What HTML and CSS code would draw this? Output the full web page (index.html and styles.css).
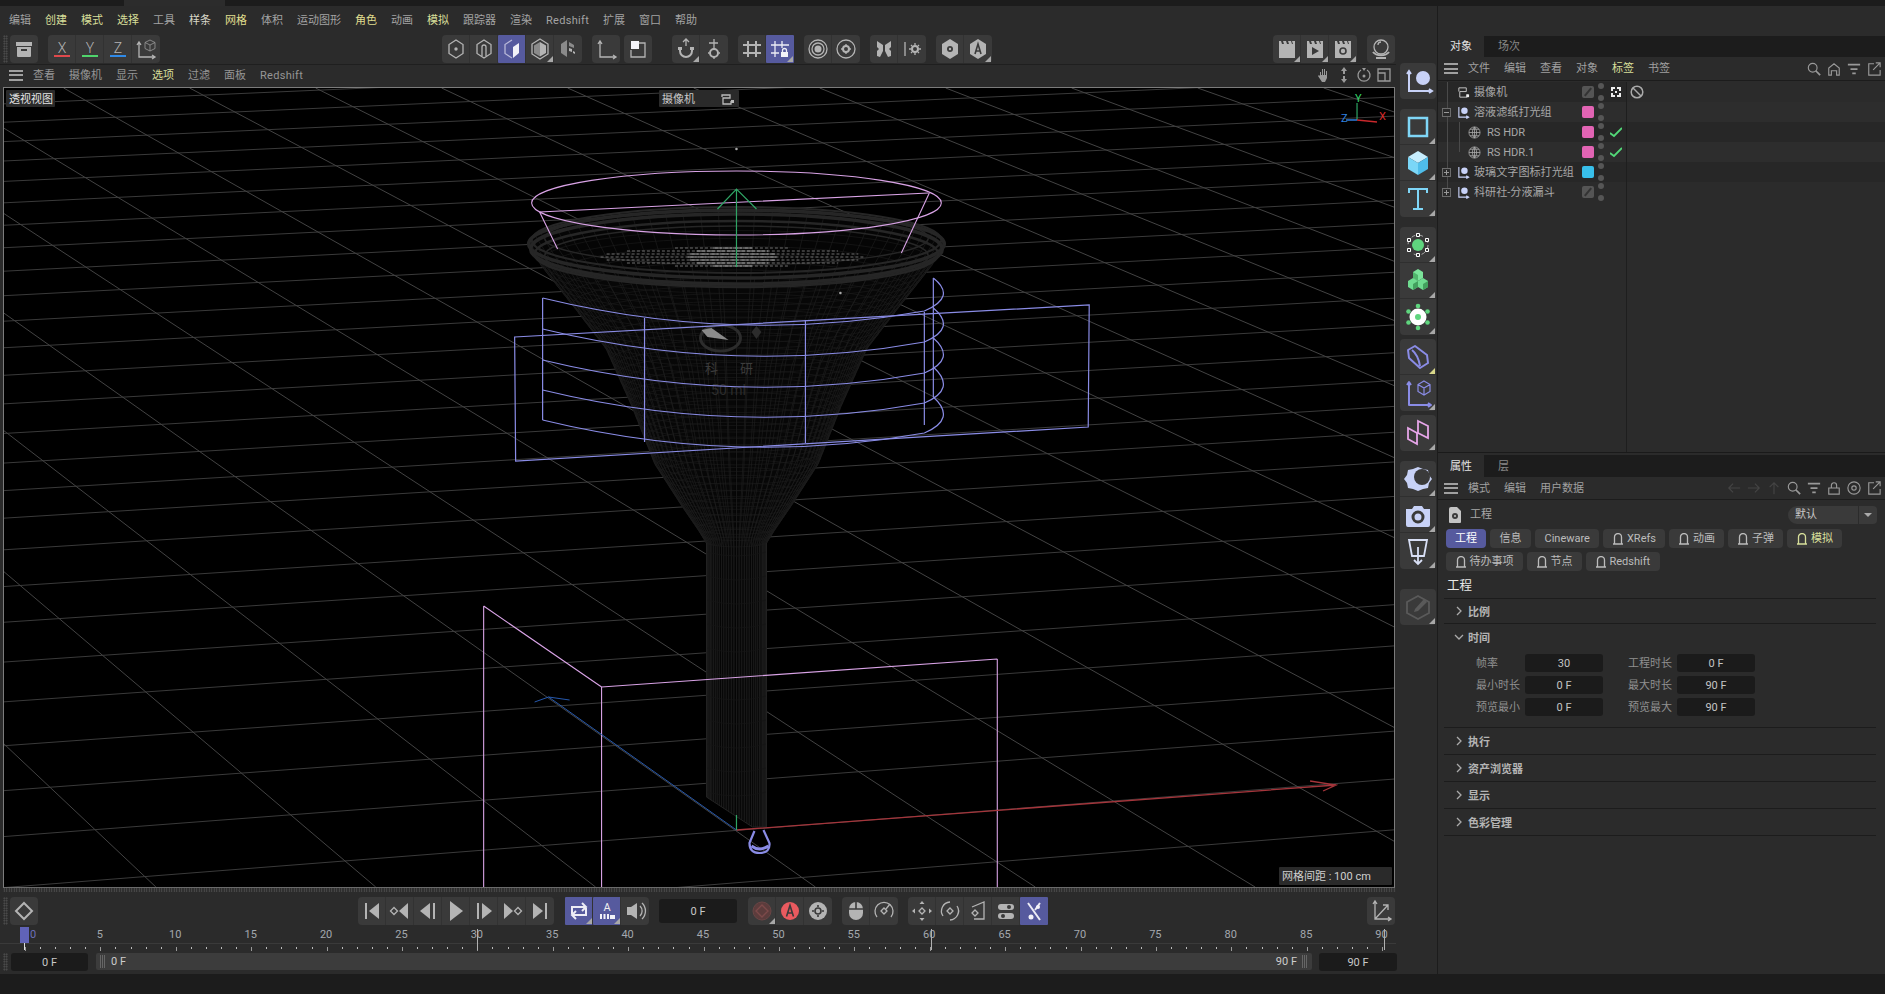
FILE: index.html
```html
<!DOCTYPE html>
<html lang="zh-CN">
<head>
<meta charset="utf-8">
<title>Cinema 4D</title>
<link rel="stylesheet" href="styles.css">
</head>
<body>
<div class="topstrip"><div class="toptab"></div></div>
<div class="workspace">
  <main class="leftcol">
    <nav class="menu">
      <span>编辑</span><span class="y">创建</span><span class="y">模式</span><span class="y">选择</span><span>工具</span><span class="w">样条</span><span class="y2">网格</span><span>体积</span><span>运动图形</span><span class="y2">角色</span><span>动画</span><span class="y">模拟</span><span>跟踪器</span><span>渲染</span><span class="lat">Redshift</span><span>扩展</span><span>窗口</span><span>帮助</span>
    </nav>
    <div class="toolbar">
      <i class="grip"></i>
      <div class="grp"><div class="ic"><svg viewBox="0 0 28 28"><path class="f" d="M6 7h16v4H6z"/><path class="f" d="M7 12h14v9a1 1 0 0 1-1 1H8a1 1 0 0 1-1-1zm4 2v2h6v-2z" fill-rule="evenodd"/></svg></div></div>
      <div class="grp g48">
        <div class="ic axl xa">X</div><div class="ic axl ya">Y</div><div class="ic axl za">Z</div>
        <div class="ic"><svg viewBox="0 0 28 28"><path class="s" d="M7 8v14h15M5 10l2-3 2 3M20 20l3 2-3 2"/><path class="t" d="M18 5l5 2.500v6L18 16l-5-2.500v-6zM13 7.500l5 2.500 5-2.500M18 10v6"/></svg></div>
      </div>
      <div class="grp g282">
        <div class="ic"><svg viewBox="0 0 28 28"><path class="s" d="M14 5l7 4.500v9L14 23l-7-4.500v-9z"/><circle class="f" cx="14" cy="14" r="1.700"/></svg></div>
        <div class="ic"><svg viewBox="0 0 28 28"><path class="s" d="M14 5l7 4.500v9L14 23l-7-4.500v-9z"/><path class="s" d="M12 21v-9a2 2 0 0 1 4 0v9"/></svg></div>
        <div class="ic on"><svg viewBox="0 0 28 28"><path class="t2" d="M14 5L7 9.500v9L14 23"/><path class="w" d="M15 12l6-4v10l-6 5z"/></svg></div>
        <div class="ic tri"><svg viewBox="0 0 28 28"><path class="s" d="M14 4l8 5v10l-8 5-8-5V9z"/><path class="f" d="M14 7l6 3.500v7.500l-6 3.500z"/><path class="m" d="M14 7l-6 3.500v7.500l6 3.500z"/></svg></div>
        <div class="ic"><svg viewBox="0 0 28 28"><path class="m" d="M13 5L7 9v9l6 4zM15 7l5 3v3l-5-2z"/><path class="f" d="M15 13l3 1v3l-3-1zM19 16l2 1v2l-2-1z"/></svg></div>
      </div>
      <div class="grp g10"><div class="ic"><svg viewBox="0 0 28 28"><path class="s" d="M8 7v15h15M6 9l2-3 2 3M21 20l3 2-3 2"/></svg></div></div>
      <div class="grp g4"><div class="ic"><svg viewBox="0 0 28 28"><path class="s" d="M14 8h7v14H7v-7"/><path class="w" d="M7 6h8v8H7z"/></svg></div></div>
      <div class="grp g20">
        <div class="ic tri"><svg viewBox="0 0 28 28"><path class="s2" d="M8 12v4a6 6 0 0 0 12 0v-4"/><path class="f" d="M6 12h4v3H6zM18 12h4v3h-4z"/><path class="s" d="M14 5v6M11 7l3-3 3 3"/></svg></div>
        <div class="ic"><svg viewBox="0 0 28 28"><circle class="s2" cx="14" cy="18" r="4"/><path class="s" d="M14 4v8M9 8h9M14 12v2M14 22v2M9 18H8M20 18h-1"/></svg></div>
      </div>
      <div class="grp g10">
        <div class="ic"><svg viewBox="0 0 28 28"><path class="s2" d="M10 6v16M18 6v16M5 10h18M5 18h18"/></svg></div>
        <div class="ic on tri"><svg viewBox="0 0 28 28"><path class="l" d="M9 6v16M16 6v7M5 10h18M5 18h8"/><path class="w" d="M15 17h7v5h-7z"/><path class="l" d="M16.500 17v-1.500a2 2 0 0 1 4 0V17"/></svg></div>
      </div>
      <div class="grp g10">
        <div class="ic"><svg viewBox="0 0 28 28"><circle class="s" cx="14" cy="14" r="9"/><circle class="s" cx="14" cy="14" r="6"/><circle class="f" cx="14" cy="14" r="3.500"/></svg></div>
        <div class="ic"><svg viewBox="0 0 28 28"><circle class="s" cx="14" cy="14" r="9"/><circle class="s2" cx="14" cy="14" r="3"/><path class="s" d="M14 9v2M14 17v2M9 14h2M17 14h2"/></svg></div>
      </div>
      <div class="grp g10">
        <div class="ic"><svg viewBox="0 0 28 28"><path class="f" d="M13 10L7 6v6l2 2-2 2v5l3 1 3-6zM15 10l6-4v6l-2 2 2 2v5l-3 1-3-6z"/></svg></div>
        <div class="ic"><svg viewBox="0 0 28 28"><path class="s" d="M7 7v14"/><circle class="s2" cx="17" cy="14" r="3"/><path class="s" d="M17 8v2M17 18v2M11 14h2M21 14h2M13 10l1 1M21 18l-1-1M13 18l1-1M21 10l-1 1"/></svg></div>
      </div>
      <div class="grp g10">
        <div class="ic"><svg viewBox="0 0 28 28"><path class="f" d="M14 4l8 5v10l-8 5-8-5V9z"/><circle class="d" cx="14" cy="14" r="3"/><circle class="f" cx="14" cy="14" r="1.200"/></svg></div>
        <div class="ic tri"><svg viewBox="0 0 28 28"><path class="f" d="M14 4l8 5v10l-8 5-8-5V9z"/><path class="ds" d="M11 19l3-10 3 10M12 16h4"/></svg></div>
      </div>
      <div class="grp g281">
        <div class="ic tri"><svg viewBox="0 0 28 28"><path class="f" d="M6 6h2l1 3h2l-1-3h3l1 3h2l-1-3h3l1 3h1l-1-3h3v17H6z"/></svg></div>
        <div class="ic tri"><svg viewBox="0 0 28 28"><path class="f" d="M6 6h2l1 3h2l-1-3h3l1 3h2l-1-3h3l1 3h1l-1-3h3v17H6z"/><path class="d" d="M11 12l7 4-7 4z"/></svg></div>
        <div class="ic tri"><svg viewBox="0 0 28 28"><path class="f" d="M6 6h2l1 3h2l-1-3h3l1 3h2l-1-3h3l1 3h1l-1-3h3v17H6z"/><circle class="ds" cx="14" cy="16" r="3"/></svg></div>
      </div>
      <div class="grp g10"><div class="ic"><svg viewBox="0 0 28 28"><circle class="s" cx="14" cy="12" r="7"/><path class="s" d="M11 10a3 3 0 0 1 3-3"/><path class="s2" d="M6 17a9 6 0 0 0 16 0M9 23h10"/></svg></div></div>
    </div>

    <div class="vphead">
      <div class="burger"><b></b><b></b><b></b></div>
      <span>查看</span><span>摄像机</span><span>显示</span><span class="y">选项</span><span>过滤</span><span>面板</span><span class="lat">Redshift</span>
      <div class="vpnav">
        <svg viewBox="0 0 16 16"><path class="f" d="M4 8V5h1v3h1V2h1v6h1V2h1v6h1V4h1v7l-2 4H6L2 9l1-1 1 1z"/></svg>
        <svg viewBox="0 0 16 16"><path class="f" d="M8 0l3 4H9v3H7V4H5zM8 16l3-4H9V9H7v3H5z"/></svg>
        <svg viewBox="0 0 16 16"><path class="s" d="M5 3a6 6 0 1 0 6 0"/><circle class="f" cx="8" cy="9" r="1.500"/><path class="f" d="M6 1h4l-2 3z"/></svg>
        <svg viewBox="0 0 16 16"><path class="s" d="M2 2h12v12H2zM2 6h7v8"/></svg>
      </div>
    </div>

    <div class="canvas">
      <svg id="scene" viewBox="4 88 1391 799" preserveAspectRatio="none">
        <g id="grid"></g>
        <g id="funnel"></g>
        <g class="lab">
          <text x="712" y="373">科</text><text x="747" y="373">研</text><text class="lab2" x="729" y="395">50 ml</text>
        </g>
        <path class="pink" d="M484 606V887M484 606L602 687M602 687L998 659M602 687V887M998 659V887"/>
        <ellipse class="pink" cx="737" cy="203" rx="205" ry="32"/>
        <path class="pink" d="M540 212L929 193M540 212L558 249M930 193L902 253"/>
        <path class="vio" d="M543 298Q737 345 925 311Q958 297 934 278M543 329Q737 376 925 342Q958 328 934 308M543 360Q737 407 925 373Q958 359 934 338M543 390Q737 437 925 403Q958 389 934 367M543 420Q737 467 925 433Q958 419 934 397"/>
        <path class="vio" d="M543 298V420M645 318V442M806 320V443M925 312V425M934 278V397"/>
        <path class="vio" d="M515 337L1090 305L1089 427L516 461Z"/>
        <path class="axr" d="M737 830L1337 785M1311 781L1337 785L1324 791"/>
        <path class="axb" d="M737 830L549 697M535 702L549 697L570 700"/>
        <path class="axg" d="M737 815V830M737 267V189M718 209L737 189L757 209"/>
        <path class="vio2" d="M755 831L750 843Q750 853 760 853Q771 853 770 843L764 830"/>
        <path class="vio3" d="M752 846Q760 852 769 846"/>
        <circle class="dotw" cx="737" cy="149" r="1.300"/><circle class="dotw" cx="841" cy="293" r="1.300"/>
        <path class="axg" d="M1358 120V103"/><path class="axr2" d="M1358 120L1378 122"/><path class="axb2" d="M1358 120L1347 120"/>
      </svg>
      <div class="tagvp persp">透视视图</div>
      <div class="tagvp campill"><span>摄像机</span>
        <svg viewBox="0 0 16 14"><path class="s" d="M2 5V3h8v3H3v6h8V9"/><path class="f" d="M11 8h3v3h-3z"/></svg>
      </div>
      <span class="axlab lx">X</span><span class="axlab ly">Y</span><span class="axlab lz">Z</span>
      <div class="tagvp gridinfo">网格间距 : 100 cm</div>
    </div>

    <div class="dotted"></div>
    <div class="tlbar">
      <i class="grip"></i>
      <div class="grp"><div class="ic"><svg viewBox="0 0 28 28"><path class="s2" d="M14 6l8 8-8 8-8-8z"/></svg></div></div>
      <div class="grp t320">
        <div class="ic"><svg viewBox="0 0 28 28"><path class="s2" d="M8 6v16"/><path class="f" d="M21 6v16L11 14z"/></svg></div>
        <div class="ic"><svg viewBox="0 0 28 28"><path class="s" d="M8 10.500L11.500 14 8 17.500 4.500 14z"/><path class="f" d="M22 6v16L13 14z"/></svg></div>
        <div class="ic"><svg viewBox="0 0 28 28"><path class="f" d="M16 6v16L6 14zM19 6h2v16h-2z"/></svg></div>
        <div class="ic"><svg viewBox="0 0 28 28"><path class="f" d="M8 4l13 10L8 24z"/></svg></div>
        <div class="ic"><svg viewBox="0 0 28 28"><path class="f" d="M7 6h2v16H7zM12 6l10 8-10 8z"/></svg></div>
        <div class="ic"><svg viewBox="0 0 28 28"><path class="f" d="M6 6l9 8-9 8z"/><path class="s" d="M20 10.500l3.500 3.500-3.500 3.500-3.500-3.500z"/></svg></div>
        <div class="ic"><svg viewBox="0 0 28 28"><path class="f" d="M7 6l10 8-10 8z"/><path class="s2" d="M20 6v16"/></svg></div>
      </div>
      <div class="grp g11">
        <div class="ic on tri"><svg viewBox="0 0 28 28"><path class="l2" d="M7 17V10h13M17 6l4 4-4 4M21 11v7H8M11 14l-4 4 4 4"/></svg></div>
        <div class="ic on tri"><span class="ltr">A</span><svg viewBox="0 0 28 28"><path class="w" d="M7 17h2v5H7zM10.500 17h2v5h-2zM14 17h2v5h-2zM17 18h5v4h-5z"/></svg></div>
        <div class="ic"><svg viewBox="0 0 28 28"><path class="f" d="M6 10h4l6-4v16l-6-4H6z"/><path class="s" d="M19 9a7 7 0 0 1 0 10M21 6a11 11 0 0 1 0 16"/></svg></div>
      </div>
      <div class="frame g10">0 F</div>
      <div class="grp g11">
        <div class="ic tri"><svg viewBox="0 0 28 28"><circle class="rd" cx="14" cy="14" r="9"/><path class="rs" d="M14 8l6 6-6 6-6-6z"/></svg></div>
        <div class="ic"><svg viewBox="0 0 28 28"><circle class="re" cx="14" cy="14" r="9"/><path class="ds" d="M10.500 19.500L14 8.500l3.500 11M11.500 16h5"/></svg></div>
        <div class="ic"><svg viewBox="0 0 28 28"><circle class="f" cx="14" cy="14" r="9"/><circle class="ds" cx="14" cy="14" r="3"/><path class="ds" d="M14 8v2M14 18v2M8 14h2M18 14h2"/></svg></div>
      </div>
      <div class="grp g10">
        <div class="ic"><svg viewBox="0 0 28 28"><rect class="f" x="7" y="5" width="14" height="18" rx="7"/><path class="ds" d="M14 5v7M7 12h14"/></svg></div>
        <div class="ic"><svg viewBox="0 0 28 28"><path class="s" d="M7 20a9 9 0 1 1 14 0"/><path class="s" d="M14 11l3 3-3 3-3-3zM16 12l4-5"/></svg></div>
      </div>
      <div class="grp g10">
        <div class="ic"><svg viewBox="0 0 28 28"><path class="s" d="M14 11l3 3-3 3-3-3z"/><path class="f" d="M14 4l2.500 3h-5zM14 24l2.500-3h-5zM4 14l3-2.500v5zM24 14l-3-2.500v5z"/></svg></div>
        <div class="ic"><svg viewBox="0 0 28 28"><path class="s" d="M14 11l3 3-3 3-3-3z"/><path class="s" d="M7 19a9 9 0 0 1 7-14M21 9a9 9 0 0 1-7 14"/></svg></div>
        <div class="ic"><svg viewBox="0 0 28 28"><path class="s" d="M8 10l12-5v17H10"/><path class="s" d="M11 13l3 3-3 3-3-3z"/></svg></div>
        <div class="ic"><svg viewBox="0 0 28 28"><rect class="f" x="6" y="7" width="16" height="6" rx="3"/><rect class="f" x="6" y="16" width="16" height="6" rx="3"/><circle class="d" cx="17" cy="10" r="2"/><circle class="d" cx="11" cy="19" r="2"/></svg></div>
        <div class="ic on"><svg viewBox="0 0 28 28"><path class="l2" d="M8 6l12 17M20 6l-5 7"/><circle class="w" cx="11" cy="20" r="2.500"/><circle class="w" cx="18" cy="10" r="2"/></svg></div>
      </div>
      <div class="grp tend"><div class="ic"><svg viewBox="0 0 28 28"><path class="s" d="M8 5v17h16M6 7l2-3 2 3M21 20l3 2-3 2M8 22L21 8M16 8h5v5"/></svg></div></div>
    </div>

    <div class="ruler">
      <div class="labels">
        <span class="zero">0</span><span>5</span><span>10</span><span>15</span><span>20</span><span>25</span><span>30</span><span>35</span><span>40</span><span>45</span><span>50</span><span>55</span><span>60</span><span>65</span><span>70</span><span>75</span><span>80</span><span>85</span><span>90</span>
      </div>
      <div class="ticks"></div>
      <i class="head"></i>
      <i class="lng l0"></i><i class="lng l30"></i><i class="lng l60"></i><i class="lng l90"></i>
    </div>

    <div class="rangebar">
      <i class="grip"></i>
      <div class="frame rs1">0 F</div>
      <div class="slider"><span class="hd"></span><span>0 F</span><span class="sp"></span><span>90 F</span><span class="hd"></span></div>
      <div class="frame rs2">90 F</div>
    </div>
  </main>

  <aside class="palette">
    <div class="pgrip"></div>
    <div class="grp col"><div class="pi"><svg viewBox="0 0 36 36"><path class="lav" d="M9 8v20h22M7 11l2-3 2 3M29 26l3 2-3 2"/><circle class="lavf" cx="23" cy="15" r="7"/></svg></div></div>
    <div class="grp col g10v">
      <div class="pi tri"><svg viewBox="0 0 36 36"><rect class="cy" x="9" y="9" width="18" height="18"/></svg></div>
      <div class="pi tri"><svg viewBox="0 0 36 36"><path fill="#c6edfd" d="M18 6l10 6-10 6-10-6z"/><path fill="#7ad6f7" d="M8 12l10 6v12L8 24z"/><path fill="#4fbdea" d="M28 12l-10 6v12l10-6z"/></svg></div>
      <div class="pi tri"><svg viewBox="0 0 36 36"><path class="cy2" d="M9 12V8h18v4M18 8v20M13 28h10"/></svg></div>
    </div>
    <div class="grp col g10v">
      <div class="pi tri"><svg viewBox="0 0 36 36"><circle fill="#5fd57e" cx="18" cy="18" r="6"/><circle class="dash" cx="18" cy="18" r="10"/><path class="hnd" d="M16.500 6.500h3v3h-3zM16.500 26.500h3v3h-3zM7.500 11.500h3v3h-3zM25.500 11.500h3v3h-3zM7.500 21.500h3v3h-3zM25.500 21.500h3v3h-3z"/></svg></div>
      <div class="pi tri"><svg viewBox="0 0 36 36"><path fill="#7be39a" d="M18 6l5 3v6l-5 3-5-3V9z"/><path fill="#50b56c" d="M13 9l5 3v6l-5-3z"/><path fill="#6fdc90" d="M13 15l5 3v6l-5 3-5-3v-6z"/><path fill="#43a15e" d="M13 21l5-3v6l-5 3z"/><path fill="#6fdc90" d="M23 15l5 3v6l-5 3-5-3v-6z"/><path fill="#43a15e" d="M23 21l5-3v6l-5 3z"/></svg></div>
      <div class="pi tri"><svg viewBox="0 0 36 36"><circle fill="#fff" cx="18" cy="18" r="8.500"/><circle fill="#5fd57e" cx="18" cy="18" r="3"/><g fill="#5fd57e"><circle cx="18" cy="7" r="2.300"/><circle cx="18" cy="29" r="2.300"/><circle cx="8.500" cy="12.500" r="2.300"/><circle cx="27.500" cy="12.500" r="2.300"/><circle cx="8.500" cy="23.500" r="2.300"/><circle cx="27.500" cy="23.500" r="2.300"/></g></svg></div>
    </div>
    <div class="grp col g4v">
      <div class="pi tri tyl"><svg viewBox="0 0 36 36"><path class="vi" d="M15 7l12 9 1 8-8 5-11-10-1-8zM12 11c5 4 7 10 8 16"/></svg></div>
      <div class="pi tri"><svg viewBox="0 0 36 36"><path class="vi" d="M9 7v23h21M7 10l2-3 2 3M28 28l3 2-3 2"/><path class="vi1" d="M24 6l6 3.500v7L24 20l-6-3.500v-7zM18 9.500l6 3.500 6-3.500M24 13v7"/></svg></div>
    </div>
    <div class="grp col g4v"><div class="pi tri"><svg viewBox="0 0 36 36"><path class="pk" d="M8 13L17 18V29L8 24ZM18 6L28 11V23L18 18Z"/></svg></div></div>
    <div class="grp col g10v">
      <div class="pi tri"><svg viewBox="0 0 36 36"><path class="lavf" d="M18 6l5 2 5 1 1 5 3 4-3 4-1 5-5 1-5 2-5-2-5-1-1-5-3-4 3-4 1-5 5-1z"/><circle fill="#3a3a3a" cx="22" cy="16" r="8"/></svg></div>
      <div class="pi tri"><svg viewBox="0 0 36 36"><path class="lavf" d="M6 12h6l2-3h8l2 3h6v16a2 2 0 0 1-2 2H8a2 2 0 0 1-2-2z"/><circle fill="none" stroke="#3a3a3a" stroke-width="3" cx="18" cy="20" r="5"/></svg></div>
      <div class="pi tri"><svg viewBox="0 0 36 36"><path class="wt" d="M9 7h18l-3 16H12zM18 14v17M14 27l4 4 4-4"/></svg></div>
    </div>
    <div class="grp col g20v"><div class="pi tri"><svg viewBox="0 0 36 36"><path class="dm" d="M18 7l11 6v11l-11 6-11-6V13z"/><path class="dmf" d="M15 20l9-10 3 3-9 9-4 1z"/></svg></div></div>
  </aside>

  <aside class="panels">
    <div class="ptabs"><div class="ptab act">对象</div><div class="ptab">场次</div></div>
    <div class="phead">
      <div class="burger"><b></b><b></b><b></b></div>
      <span>文件</span><span>编辑</span><span>查看</span><span>对象</span><span class="y">标签</span><span>书签</span>
      <div class="picons">
        <svg viewBox="0 0 16 16"><circle class="s" cx="6.500" cy="6.500" r="5"/><path class="s2" d="M10 10l5 5"/></svg>
        <svg viewBox="0 0 16 16"><path class="s" d="M2 15V7l6-5 6 5v8h-3v-5H5v5z"/></svg>
        <svg viewBox="0 0 16 16"><path class="s2" d="M1 3h14M4 8h8M6 13h4"/></svg>
        <svg viewBox="0 0 16 16"><path class="s" d="M8 2H2v13h13V9M10 1h5v5M15 1L7 9"/></svg>
      </div>
    </div>
    <div class="tree">
      <div class="treecols">
        <div class="row r1 vline">
          <span class="tg none"></span><svg class="ni" viewBox="0 0 14 14"><path class="wh" d="M2 6V2h8v4H3v6h8V9"/><path class="whf" d="M10 9h3v3h-3z"/></svg><span class="name">摄像机</span>
          <span class="sw gray"></span><span class="dots"><i></i><i></i></span><span class="tagc"><svg viewBox="0 0 12 12"><path class="whf" d="M1 1h10v10H1zM3 3v6h6V3z" fill-rule="evenodd"/><path class="hole" d="M5 1h2v2H5zM5 9h2v2H5zM1 5h2v2H1zM9 5h2v2H9z"/><path class="whf" d="M5 5h2v2H5z"/></svg></span>
        </div>
        <div class="row vline">
          <span class="tg minus"></span><svg class="ni" viewBox="0 0 14 14"><path class="lv" d="M2 1v11h11M10 10.500l2.500 1.500-2.500 1.500"/><circle class="lvf" cx="8" cy="5" r="3.500"/></svg><span class="name">溶液滤纸打光组</span>
          <span class="sw pinks"></span><span class="dots"><i></i><i></i></span><span class="tagc"></span>
        </div>
        <div class="row r1 vline child">
          <svg class="ni" viewBox="0 0 14 14"><circle class="gl" cx="7" cy="7" r="6"/><path class="gl" d="M1 7h12M2 3.500h10M2 10.500h10M7 1v12M7 1c-3 3-3 9 0 12M7 1c3 3 3 9 0 12"/></svg><span class="name">RS HDR</span>
          <span class="sw pinks"></span><span class="dots"><i></i><i></i></span><span class="tagc"><svg viewBox="0 0 12 12"><path class="chk" d="M0 7l4 3 8-8"/></svg></span>
        </div>
        <div class="row vline child lastch">
          <svg class="ni" viewBox="0 0 14 14"><circle class="gl" cx="7" cy="7" r="6"/><path class="gl" d="M1 7h12M2 3.500h10M2 10.500h10M7 1v12M7 1c-3 3-3 9 0 12M7 1c3 3 3 9 0 12"/></svg><span class="name">RS HDR.1</span>
          <span class="sw pinks"></span><span class="dots"><i></i><i></i></span><span class="tagc"><svg viewBox="0 0 12 12"><path class="chk" d="M0 7l4 3 8-8"/></svg></span>
        </div>
        <div class="row r1 vline">
          <span class="tg plus"></span><svg class="ni" viewBox="0 0 14 14"><path class="lv" d="M2 1v11h11M10 10.500l2.500 1.500-2.500 1.500"/><circle class="lvf" cx="8" cy="5" r="3.500"/></svg><span class="name">玻璃文字图标打光组</span>
          <span class="sw blue"></span><span class="dots"><i></i><i></i></span><span class="tagc"></span>
        </div>
        <div class="row vhalf">
          <span class="tg plus"></span><svg class="ni" viewBox="0 0 14 14"><path class="lv" d="M2 1v11h11M10 10.500l2.500 1.500-2.500 1.500"/><circle class="lvf" cx="8" cy="5" r="3.500"/></svg><span class="name">科研社-分液漏斗</span>
          <span class="sw gray"></span><span class="dots"><i></i><i></i></span><span class="tagc"></span>
        </div>
      </div>
      <div class="tagcol">
        <div class="tr r1"><svg class="ban" viewBox="0 0 14 14"><circle class="bn" cx="7" cy="7" r="5.800"/><path class="bn" d="M3 3l8 8"/></svg></div>
        <div class="tr"></div><div class="tr r1"></div><div class="tr"></div><div class="tr r1"></div>
      </div>
    </div>

    <div class="ptabs attrtabs"><div class="ptab act">属性</div><div class="ptab">层</div></div>
    <div class="phead ah">
      <div class="burger"><b></b><b></b><b></b></div>
      <span>模式</span><span>编辑</span><span>用户数据</span>
      <div class="picons wide">
        <svg class="dimi" viewBox="0 0 16 16"><path class="s" d="M15 8H2M7 3L2 8l5 5"/></svg>
        <svg class="dimi" viewBox="0 0 16 16"><path class="s" d="M1 8h13M9 3l5 5-5 5"/></svg>
        <svg class="dimi" viewBox="0 0 16 16"><path class="s" d="M8 15V2M3 7l5-5 5 5"/></svg>
        <svg viewBox="0 0 16 16"><circle class="s" cx="6.500" cy="6.500" r="5"/><path class="s2" d="M10 10l5 5"/></svg>
        <svg viewBox="0 0 16 16"><path class="s2" d="M1 3h14M4 8h8M6 13h4"/></svg>
        <svg viewBox="0 0 16 16"><path class="s" d="M2 8h12v7H2zM5 8V5a3 3 0 0 1 6 0v3"/></svg>
        <svg viewBox="0 0 16 16"><circle class="s" cx="8" cy="8" r="7"/><circle class="s" cx="8" cy="8" r="2.500"/></svg>
        <svg viewBox="0 0 16 16"><path class="s" d="M8 2H2v13h13V9M10 1h5v5M15 1L7 9"/></svg>
      </div>
    </div>
    <div class="attr">
      <div class="atitle">
        <svg viewBox="0 0 14 18"><path class="f" d="M3 1h6l4 4v11a1 1 0 0 1-1 1H2a1 1 0 0 1-1-1V3a2 2 0 0 1 2-2z"/><circle class="d" cx="7" cy="10" r="3"/><circle class="f" cx="7" cy="10" r="1"/></svg>
        <span>工程</span>
        <div class="dd"><span>默认</span><i></i></div>
      </div>
      <div class="tabs">
        <div class="tb act">工程</div><div class="tb">信息</div><div class="tb">Cineware</div>
        <div class="tb"><svg viewBox="0 0 10 12"><path class="s" d="M0 11h10M1.500 11V4a3.500 3.500 0 0 1 7 0v7"/></svg>XRefs</div>
        <div class="tb"><svg viewBox="0 0 10 12"><path class="s" d="M0 11h10M1.500 11V4a3.500 3.500 0 0 1 7 0v7"/></svg>动画</div>
        <div class="tb"><svg viewBox="0 0 10 12"><path class="s" d="M0 11h10M1.500 11V4a3.500 3.500 0 0 1 7 0v7"/></svg>子弹</div>
        <div class="tb y"><svg viewBox="0 0 10 12"><path class="s" d="M0 11h10M1.500 11V4a3.500 3.500 0 0 1 7 0v7"/></svg>模拟</div>
        <div class="tb"><svg viewBox="0 0 10 12"><path class="s" d="M0 11h10M1.500 11V4a3.500 3.500 0 0 1 7 0v7"/></svg>待办事项</div>
        <div class="tb"><svg viewBox="0 0 10 12"><path class="s" d="M0 11h10M1.500 11V4a3.500 3.500 0 0 1 7 0v7"/></svg>节点</div>
        <div class="tb"><svg viewBox="0 0 10 12"><path class="s" d="M0 11h10M1.500 11V4a3.500 3.500 0 0 1 7 0v7"/></svg>Redshift</div>
      </div>
      <div class="h2">工程</div>
      <div class="sec s25"><svg viewBox="0 0 8 10"><path class="s" d="M2 1l4 4-4 4"/></svg><b>比例</b></div>
      <div class="sec open">
        <div class="shead"><svg viewBox="0 0 10 8"><path class="s" d="M1 2l4 4 4-4"/></svg><b>时间</b></div>
        <div class="fields">
          <label>帧率</label><div class="fi">30</div><label>工程时长</label><div class="fi">0 F</div>
          <label>最小时长</label><div class="fi">0 F</div><label>最大时长</label><div class="fi">90 F</div>
          <label>预览最小</label><div class="fi">0 F</div><label>预览最大</label><div class="fi">90 F</div>
        </div>
      </div>
      <div class="sec"><svg viewBox="0 0 8 10"><path class="s" d="M2 1l4 4-4 4"/></svg><b>执行</b></div>
      <div class="sec"><svg viewBox="0 0 8 10"><path class="s" d="M2 1l4 4-4 4"/></svg><b>资产浏览器</b></div>
      <div class="sec"><svg viewBox="0 0 8 10"><path class="s" d="M2 1l4 4-4 4"/></svg><b>显示</b></div>
      <div class="sec"><svg viewBox="0 0 8 10"><path class="s" d="M2 1l4 4-4 4"/></svg><b>色彩管理</b></div>
    </div>
  </aside>
</div>
<div class="footer"></div>
<script src="scene.js"></script>
</body>
</html>
```
FILE: styles.css
```css
*{box-sizing:border-box}
html,body{margin:0;padding:0}
body{width:1885px;height:994px;overflow:hidden;background:#2b2b2b;color:#a3a3a3;font:11px/1 Roboto,"Noto Sans CJK SC",sans-serif}
.y{color:#d7df9a}.w{color:#d8d8c8}.y2{color:#e0df8f}
.lat{letter-spacing:.3px}
svg{display:block}
.s{fill:none;stroke:currentColor;stroke-width:1.3}
.s2{fill:none;stroke:currentColor;stroke-width:2}
.f{fill:currentColor}
.m{fill:#8a8a8a}
.d{fill:#3a3a3a}
.ds{fill:none;stroke:#3a3a3a;stroke-width:1.6}
.t{fill:none;stroke:#9a9a9a;stroke-width:.8}
.t2{fill:none;stroke:#b8b8d8;stroke-width:1.3}
.l{fill:none;stroke:#ececf5;stroke-width:1.3}
.l2{fill:none;stroke:#ececf5;stroke-width:2}
svg .w{fill:#f2f2f8}
.rd{fill:#5c3c3c;stroke:#6a4545}
.rs{fill:none;stroke:#7c4a4a;stroke-width:1.4}
.re{fill:#ea5a5f}

.topstrip{height:6px;background:#1c1c1c}
.toptab{width:101px;height:6px;margin-left:124px;background:#2c2c2c}
.workspace{display:flex;height:968px}
.footer{height:20px;background:#1c1c1c}

.leftcol{width:1396px;flex:none;display:flex;flex-direction:column}
.menu{height:29px;display:flex;align-items:center;gap:14px;padding-left:9px;padding-bottom:1px}
.toolbar,.tlbar{display:flex;height:28px;padding-left:3px}
.grip{display:block;width:5px;margin-right:2px;flex:none;background:radial-gradient(circle,#555 .7px,transparent 1px) 0 0/2.5px 2.5px}
.grp{display:flex;flex:none;background:#3a3a3a;border-radius:4px;height:28px}
.grp.col{flex-direction:column;height:auto;width:36px}
.ic{width:28px;height:28px;flex:none;position:relative;color:#b4b4b4;display:flex;align-items:center;justify-content:center}
.ic+.ic{box-shadow:-1px 0 0 #323232}
.ic svg{width:28px;height:28px}
.ic.on{background:#565a9e;color:#eee;border-radius:1px}
.tri::after{content:"";position:absolute;right:1px;bottom:1px;border:3px solid transparent;border-right-color:#a8a8a8;border-bottom-color:#a8a8a8}
.tyl::after{border-right-color:#d9d88a;border-bottom-color:#d9d88a}
.axl{font-size:14px;font-weight:300;padding-bottom:3px}
.axl::after{content:"";position:absolute;left:6px;right:6px;bottom:6px;height:2px}
.xa::after{background:#e0494c}.ya::after{background:#4fd46c}.za::after{background:#2f8ae8}
.g48,.g10{margin-left:10px}
.g4{margin-left:4px}.g20{margin-left:20px}.g282{margin-left:282px}.g281{margin-left:281px}.g11{margin-left:11px}
.t320{margin-left:320px}.tend{margin-left:319px}
.g10v{margin-top:10px}.g4v{margin-top:4px}.g20v{margin-top:20px}

.vphead{height:23px;margin-top:1px;border-top:1px solid #1f1f1f;display:flex;align-items:center;padding:0 0 2px 9px;gap:14px;position:relative;color:#969696}
.burger{width:14px;height:11px;display:flex;flex-direction:column;justify-content:space-between;flex:none;margin-right:-4px}
.burger b{display:block;height:2px;background:#a0a0a0}
.vpnav{margin-left:auto;display:flex;gap:4px;padding-right:4px;color:#9a9a9a}
.vpnav svg{width:16px;height:16px}

.canvas{width:1392px;height:801px;margin-left:3px;border:1px solid #7c7c7c;border-bottom-color:#6a6a6a;background:#000;position:relative;overflow:hidden}
#scene{width:100%;height:100%;position:absolute;left:0;top:0}
.pink{fill:none;stroke:#d9a3e6;stroke-width:1.1}
.vio{fill:none;stroke:#8a8ce6;stroke-width:1.2}
.vio2{fill:none;stroke:#8a8ce6;stroke-width:2.2}
.vio3{fill:none;stroke:#8a8ce6;stroke-width:3}
.axr{fill:none;stroke:#a5353b;stroke-width:1.3}
.axb{fill:none;stroke:#2a62c0;stroke-width:.9}
.axg{fill:none;stroke:#2fa565;stroke-width:1.2}
.axr2{stroke:#c9282c;stroke-width:1.5}.axb2{stroke:#2f7fe0;stroke-width:1.5}
.dotw{fill:#aaa}
.lab text{fill:#3c3c3c;font-size:13px;text-anchor:middle}
.lab .lab2{font-size:14px;fill:#2c2c2c}
.tagvp{position:absolute;background:#2a2a2a;color:#cfcfcf;height:17px;display:flex;align-items:center;border-radius:1px;padding-top:1px}
.persp{left:2px;top:2px;padding:1px 2px 0 3px;color:#e4e4e4}
.campill{left:655px;top:2px;width:80px;padding:1px 3px 0 3px;justify-content:space-between;color:#c8c8c8}
.campill svg{width:16px;height:14px;color:#bbb}
.gridinfo{right:2px;bottom:2px;width:113px;height:18px;padding-left:3px}
.axlab{position:absolute;font-size:11px}
.lx{left:1375px;top:23px;color:#d42a2a}.ly{left:1351px;top:5px;color:#35d56a}.lz{left:1337px;top:25px;color:#2f80e0}

.dotted{height:4px;margin-left:3px;background:radial-gradient(circle,#505050 .6px,transparent 1px) 0 0/2.5px 2px}
.tlbar{margin-top:5px}
.frame{background:#1b1b1b;border-radius:3px;flex:none;color:#c8c8c8;display:flex;align-items:center;justify-content:center}
.tlbar .frame{width:78px;height:24px;margin-top:2px}
.ltr{position:absolute;top:5px;left:0;right:0;text-align:center;font-size:11px;color:#eee}

.ruler{height:25px;margin-top:2px;position:relative;overflow:hidden}
.labels{display:flex;margin-left:-13.2px;height:16px;align-items:center;padding-bottom:1px;color:#a3a8ae}
.labels span{width:75.4px;flex:none;text-align:center}
.labels .zero{padding-left:17px;color:#6d70b8}
.ticks{position:absolute;left:0;right:0;top:16px;height:9px;border-top:1px solid #3a3a3a;
  background:repeating-linear-gradient(90deg,#999 0 1px,transparent 1px 75.4px) 24.5px 3px/100% 4px no-repeat,
  repeating-linear-gradient(90deg,#bbb 0 1px,transparent 1px 15.08px) 24.5px 3px/100% 2px no-repeat}
.head{position:absolute;left:20px;top:0;width:9px;height:16px;background:#6063b8}
.lng{position:absolute;width:1px;background:#b0b0b0;top:2px;height:21px}
.l0{left:24px;top:16px;height:7px;background:#ddd}.l30{left:477px}.l60{left:931px}.l90{left:1384px}
.rangebar{display:flex;height:18px;margin-top:1px;padding-left:3px;align-items:stretch}
.rangebar .grip{margin-right:1px}
.rs1{width:77px;margin-left:2px}
.slider{width:1216px;margin-left:8px;background:#3c3c3c;border-radius:2px;display:flex;align-items:center;gap:5px;padding:0 4px;color:#ccc;flex:none;height:17px}
.slider .sp{flex:1}
.slider .hd{width:6px;height:13px;background:repeating-linear-gradient(90deg,#666 0 1px,transparent 1px 2px)}
.rs2{width:78px;margin-left:7px}

.palette{width:41px;flex:none;padding:0 1px 0 4px;position:relative}
.pgrip{height:30px;margin:0 4px 27px 8px;background:radial-gradient(circle,#555 .7px,transparent 1px) 0 31px/2.5px 2.5px repeat-x}
.pi{width:36px;height:36px;position:relative;flex:none}
.pi+.pi{box-shadow:0 -1px 0 #2f2f2f}
.pi svg{width:36px;height:36px}
.lav{fill:none;stroke:#c8d2f7;stroke-width:2}
.lavf{fill:#c8d2f7}
.cy{fill:none;stroke:#7fd6f7;stroke-width:2.5}
.cy2{fill:none;stroke:#7fd6f7;stroke-width:2}
.dash{fill:none;stroke:#aaa;stroke-width:1;stroke-dasharray:4 4}
.hnd{fill:#3a3a3a;stroke:#fff;stroke-width:1}
.vi{fill:none;stroke:#8a8ce6;stroke-width:2;stroke-linejoin:round}
.vi1{fill:none;stroke:#8a8ce6;stroke-width:1.2}
.pk{fill:none;stroke:#e6a5e8;stroke-width:1.8}
.wt{fill:none;stroke:#d8dff5;stroke-width:1.8}
.dm{fill:none;stroke:#5a5a5a;stroke-width:1.8}
.dmf{fill:#5a5a5a}

.panels{flex:1;border-left:1px solid #1c1c1c;padding-top:30px;display:flex;flex-direction:column;min-width:0}
.ptabs{height:21px;background:#1c1c1c;display:flex;flex:none}
.ptab{width:46px;display:flex;align-items:center;padding-left:12px;color:#888;font-size:11px}
.ptab+.ptab{padding-left:14px}
.ptab.act{background:#2b2b2b;color:#e4e4e4}
.attrtabs{height:22px}
.phead{height:24px;flex:none;display:flex;align-items:center;gap:14px;padding-left:6px;border-bottom:1px solid #1c1c1c;color:#a0a0a0}
.phead.ah{height:23px}
.phead .burger{margin-right:-4px}
.picons{margin-left:auto;display:flex;gap:6px;padding-right:4px;color:#999}
.picons svg{width:14px;height:14px}
.dimi{color:#444}
.tree{height:372px;display:flex;padding-top:1px;border-bottom:1px solid #1a1a1a;margin-bottom:2px;flex:none}
.treecols{width:189px;flex:none;border-right:1px solid #1e1e1e}
.row{height:20px;display:flex;align-items:center;padding-left:4px;position:relative;background:#2d2d2d;color:#a8a8a8}
.row.r1{background:#272727}
.row:last-child{background:#2b2b2b}
.tg{width:9px;height:9px;flex:none;margin-right:6px;border:1px solid #6c6c6c;background:#2b2b2b;position:relative;z-index:1;color:#888}
.tg.none{border-color:transparent;background:none}
.tg.minus::before,.tg.plus::before{content:"";position:absolute;left:1px;right:1px;top:3px;height:1px;background:#999}
.tg.plus::after{content:"";position:absolute;top:1px;bottom:1px;left:3px;width:1px;background:#999}
.vline::before,.vhalf::before{content:"";position:absolute;left:9px;top:0;bottom:0;width:1px;background:#4a4a4a}
.vhalf::before{bottom:10px}
.child::after{content:"";position:absolute;left:21px;top:0;bottom:0;width:1px;background:#4a4a4a}
.lastch::after{bottom:10px}
.ni{width:13px;height:13px;flex:none;margin-right:4px}
.child .ni{margin-left:26px;margin-right:6px}
.name{flex:1;white-space:nowrap;font-size:11.1px;padding-top:2px}
.sw{width:12px;height:12px;flex:none;border-radius:2px;margin-right:-1px;transform:translateX(1px)}
.pinks{background:#e264b4}.blue{background:#38bfea}
.gray{background:#555;position:relative}
.gray::after{content:"";position:absolute;left:5px;top:1px;width:2px;height:10px;background:#333;transform:rotate(40deg)}
.dots{width:16px;flex:none;display:flex;flex-direction:column;align-items:center;gap:6px;margin-left:1px}
.dots i{width:6px;height:6px;border-radius:50%;background:#565656;display:block}
.tagc{width:16px;height:12px;flex:none;margin-right:1px;display:block}
.tagc svg{width:12px;height:12px;margin-left:1px}
.wh{fill:none;stroke:#ccc;stroke-width:1}.whf{fill:#eee}
.hole{fill:#272727}
.lv{fill:none;stroke:#c8d2f7;stroke-width:1.2}.lvf{fill:#c8d2f7}
.gl{fill:none;stroke:#b0b0b0;stroke-width:.8}
.chk{fill:none;stroke:#52d878;stroke-width:1.8}
.tagcol{flex:1}
.tr{height:20px;background:#2d2d2d;padding-left:3px;display:flex;align-items:center}
.tr.r1{background:#272727}
.tr:first-child{background:#2b2b2b}
.ban{width:14px;height:14px}
.bn{fill:none;stroke:#aaa;stroke-width:1.5}

.attr{flex:1;padding:5px 9px 0 6px;color:#a8a8a8}
.atitle{height:19px;display:flex;align-items:center;padding-left:4px;color:#a8a8a8;gap:8px}
.atitle>svg{width:14px;height:18px;color:#c4c4c4}
.dd{margin-left:auto;margin-right:-1px;width:89px;height:18px;background:#3a3a3a;border-radius:9px 4px 4px 9px;display:flex;align-items:center;padding-left:7px;color:#c8c8c8;position:relative}
.dd i{position:absolute;right:0;top:0;width:19px;height:18px;border-left:1px solid #2b2b2b}
.dd i::after{content:"";position:absolute;left:5px;top:7px;border:4px solid transparent;border-top-color:#aaa}
.tabs{display:flex;flex-wrap:wrap;gap:4px;margin:5px 0 0 2px;width:404px}
.tb{height:19px;padding:0 9.5px;background:#3a3a3a;border-radius:4px;display:flex;align-items:center;gap:4px;color:#bcbcbc}
.tb svg{width:10px;height:12px;flex:none}
.tb.act{background:#565a9e;color:#fff;padding:0 9px}
.tb.y{color:#d7df9a}
.h2{height:28px;font-size:12.5px;line-height:30px;color:#e8e8e8;padding-left:3px;border-bottom:1px solid #1c1c1c}
.sec{height:27px;border-bottom:1px solid #1c1c1c;display:flex;align-items:center;padding-left:11px}
.sec svg{width:8px;height:10px;color:#aaa;margin-right:5px;flex:none}
.sec b{font-weight:700;color:#b4b4b4;padding-top:2px}
.sec.s25{height:25px}
.sec.open{height:104px;display:block;padding:0}
.shead{height:26px;display:flex;align-items:center;padding-left:10px}
.shead svg{width:10px;height:8px;margin-right:4px}
.fields{display:grid;grid-template-columns:49px 78px 74px 78px;row-gap:4px;margin:4px 0 0 32px;width:280px}
.fields label{height:18px;line-height:19px;color:#909090;white-space:nowrap}
.fields label:nth-child(4n+3){padding-left:25px}
.fi{height:18px;background:#1b1b1b;border-radius:3px;display:flex;align-items:center;justify-content:center;color:#c4c4c4;padding-top:1px}
```
FILE: scene.js
```js
(function () {
  var NS = 'http://www.w3.org/2000/svg';
  function el(parent, name, attrs) {
    var n = document.createElementNS(NS, name);
    for (var k in attrs) n.setAttribute(k, attrs[k]);
    parent.appendChild(n);
    return n;
  }
  var grid = document.getElementById('grid');
  var fn = document.getElementById('funnel');

  // Ground grid: family running towards the far right vanishing point
  var rows = [84, 102, 121, 140, 160, 181, 203, 225, 248, 272, 297, 323, 350, 378, 407, 436, 463, 490, 521, 557, 592, 631, 670, 713, 757, 802, 852, 905, 965];
  rows.forEach(function (y0) {
    var m = (-884 - y0) / 22250;
    el(grid, 'line', { x1: 0, y1: y0 + (0 - 460) * m, x2: 1400, y2: y0 + (1400 - 460) * m, stroke: '#3a3a3a', 'stroke-width': 1 });
  });
  // Ground grid: family running towards the far left vanishing point
  for (var k = -3; k <= 13; k++) {
    var xb = 816 + 220 * k;
    var d = (xb + 1833) / (887 + 985);
    el(grid, 'line', { x1: xb - 799 * d, y1: 88, x2: xb, y2: 887, stroke: '#434343', 'stroke-width': 1 });
  }

  // Funnel profile: y of ring centre, half width
  var prof = [[245, 208], [263, 196], [305, 163], [347, 131], [405, 105], [463, 82], [505, 55], [530, 38], [543, 30]];
  var TILT = 0.16, CX = 737, i;

  // occluding silhouette
  var sil = 'M' + (CX - 208) + ' 245';
  prof.forEach(function (p) { sil += 'L' + (CX - p[1]) + ' ' + p[0]; });
  sil += 'L707 797L753 827L767 827L767 543';
  prof.slice().reverse().forEach(function (p) { sil += 'L' + (CX + p[1]) + ' ' + p[0]; });
  sil += 'Z';
  el(fn, 'path', { d: sil, fill: '#070707' });
  el(fn, 'ellipse', { cx: CX, cy: 245, rx: 208, ry: 36, fill: '#050505' });

  function hwAt(y) {
    for (var q = 0; q < prof.length - 1; q++) {
      if (y >= prof[q][0] && y <= prof[q + 1][0]) {
        var t = (y - prof[q][0]) / (prof[q + 1][0] - prof[q][0]);
        return prof[q][1] + (prof[q + 1][1] - prof[q][1]) * t;
      }
    }
    return 30;
  }
  // rings on the cone
  for (var y = 262; y < 543; y += 7) {
    var h = hwAt(y);
    el(fn, 'ellipse', { cx: CX, cy: y, rx: h, ry: h * TILT, fill: 'none', stroke: '#191919', 'stroke-width': 0.7 });
  }
  // meridians on the cone and tube
  var N = 72;
  for (i = 0; i < N; i++) {
    var a = (i / N) * Math.PI * 2, cs = Math.cos(a), sn = Math.sin(a), pts = [];
    prof.forEach(function (p) { pts.push((CX + p[1] * cs).toFixed(1) + ',' + (p[0] + p[1] * TILT * sn).toFixed(1)); });
    var xt = CX + 30 * cs;
    var yEnd = Math.min(827, 797 + (xt - 707) * 0.65);
    pts.push(xt.toFixed(1) + ',' + yEnd.toFixed(1));
    el(fn, 'polyline', { points: pts.join(' '), fill: 'none', stroke: '#1c1c1c', 'stroke-width': 0.7 });
  }
  // tube rings
  for (y = 552; y < 800; y += 24) {
    el(fn, 'path', { d: 'M707 ' + y + 'Q737 ' + (y + 8) + ' 767 ' + y, fill: 'none', stroke: '#161616', 'stroke-width': 0.7 });
  }
  el(fn, 'path', { d: 'M707 543V797L753 827H767V543', fill: 'none', stroke: '#222', 'stroke-width': 1 });

  // rim bands
  [[240, 205, 33, 2], [244, 208, 34, 3.5], [249, 206, 35, 3.5], [254, 202, 33, 2.5], [238, 192, 27, 1.4], [256, 192, 30, 1.4]].forEach(function (r) {
    el(fn, 'ellipse', { cx: CX, cy: r[0], rx: r[1], ry: r[2], fill: 'none', stroke: '#262626', 'stroke-width': r[3] });
  });

  // bright mesh at the bottom of the visible inner surface
  for (y = 248; y <= 266; y += 3) {
    var r = Math.sqrt(Math.max(0, 1 - Math.pow((y - 257) / 10, 2))) * 132;
    el(fn, 'line', { x1: 733 - r, y1: y, x2: 733 + r, y2: y, stroke: '#7a7a7a', 'stroke-width': 0.9, 'stroke-dasharray': '3 2' });
    var r2 = r * 0.34;
    el(fn, 'line', { x1: 733 - r2, y1: y, x2: 733 + r2, y2: y, stroke: '#a0a0a0', 'stroke-width': 1.2, 'stroke-dasharray': '9 1' });
  }

  // printed logo on the glass
  el(fn, 'ellipse', { cx: 721, cy: 338, rx: 20, ry: 13, fill: 'none', stroke: '#2c2c2c', 'stroke-width': 3 });
  el(fn, 'path', { d: 'M702 330L712 328L729 340L708 337Z', fill: '#8a8a8a' });
  el(fn, 'path', { d: 'M757 326L762 332L757 339L752 332Z', fill: '#2c2c2c' });
})();
```
